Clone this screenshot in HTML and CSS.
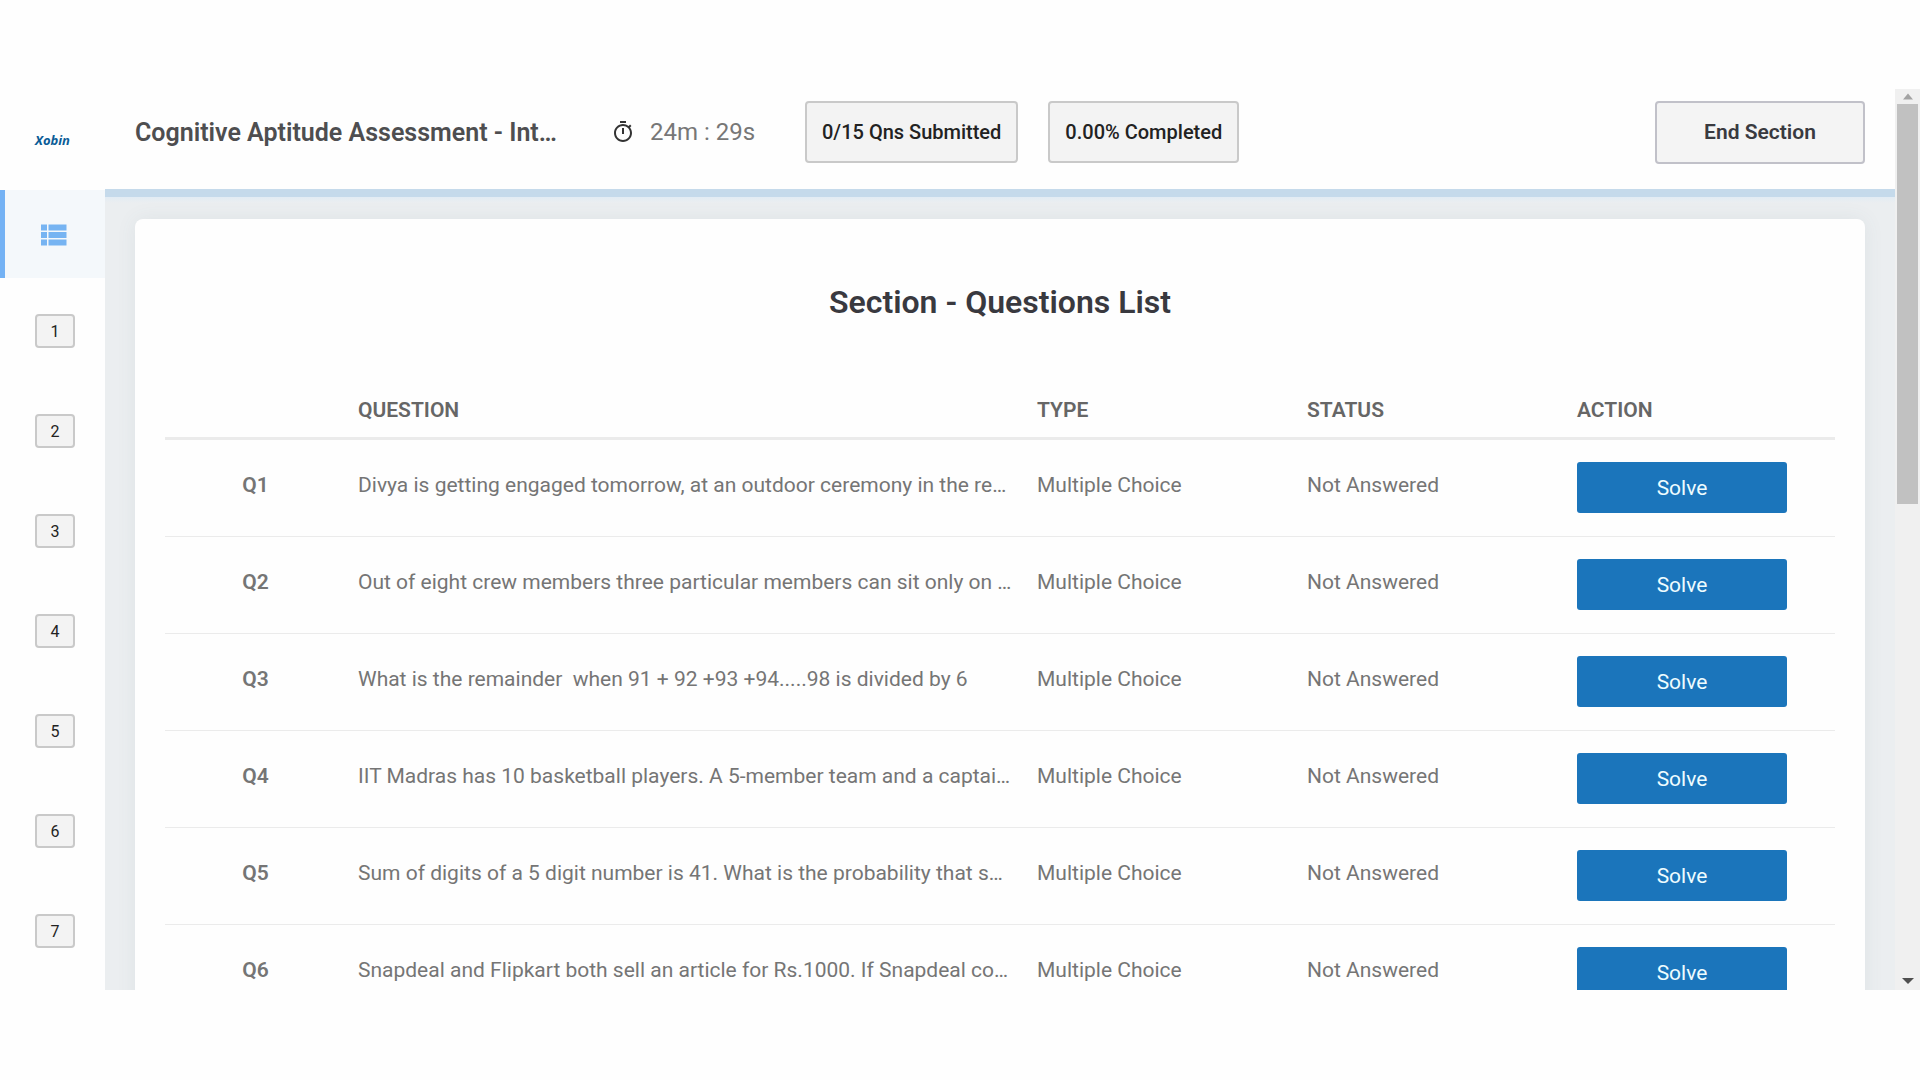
FILE: index.html
```html
<!DOCTYPE html>
<html lang="en">
<head>
    <meta charset="UTF-8">
    <meta name="viewport" content="width=device-width, initial-scale=1.0">
    <title>Section - Questions List</title>
    <link rel="stylesheet" href="styles.css">
</head>
<body>
    <div class="app">
        <aside class="sidebar">
            <a href="#" class="logo">Xobin</a>
            <nav class="side-nav">
                <a href="#" class="nav-list" aria-label="Questions list">
                    <svg width="36" height="36" viewBox="0 0 24 24" fill="currentColor"><path d="M4 14h4v-4H4v4zm0 5h4v-4H4v4zM4 9h4V5H4v4zm5 5h12v-4H9v4zm0 5h12v-4H9v4zM9 5v4h12V5H9z"/></svg>
                </a>
                <button class="nav-num">1</button>
                <button class="nav-num">2</button>
                <button class="nav-num">3</button>
                <button class="nav-num">4</button>
                <button class="nav-num">5</button>
                <button class="nav-num">6</button>
                <button class="nav-num">7</button>
            </nav>
        </aside>

        <div class="page">
            <header class="topbar">
                <h1 class="test-name">Cognitive Aptitude Assessment - Int…</h1>
                <div class="timer">
                    <svg width="24" height="24" viewBox="0 0 24 24" fill="currentColor"><path d="M15 1H9v2h6V1zm-4 13h2V8h-2v6zm8.030-6.610l1.420-1.420c-.43-.51-.9-.99-1.410-1.410l-1.420 1.420C16.070 4.740 14.120 4 12 4c-4.970 0-9 4.030-9 9s4.020 9 9 9 9-4.030 9-9c0-2.120-.74-4.070-1.970-5.610zM12 20c-3.870 0-7-3.130-7-7s3.130-7 7-7 7 3.130 7 7-3.130 7-7 7z"/></svg>
                    <span class="time">24m : 29s</span>
                </div>
                <div class="badge">0/15 Qns Submitted</div>
                <div class="badge">0.00% Completed</div>
                <button class="end-btn">End Section</button>
            </header>

            <main class="content">
                <section class="card">
                    <h2>Section - Questions List</h2>
                    <table class="questions">
                        <thead>
                            <tr>
                                <th class="col-num"></th>
                                <th class="col-question">QUESTION</th>
                                <th>TYPE</th>
                                <th>STATUS</th>
                                <th>ACTION</th>
                            </tr>
                        </thead>
                        <tbody>
                            <tr>
                                <th scope="row">Q1</th>
                                <td>Divya is getting engaged tomorrow, at an outdoor ceremony in the re…</td>
                                <td>Multiple Choice</td>
                                <td>Not Answered</td>
                                <td><button class="solve-btn">Solve</button></td>
                            </tr>
                            <tr>
                                <th scope="row">Q2</th>
                                <td>Out of eight crew members three particular members can sit only on …</td>
                                <td>Multiple Choice</td>
                                <td>Not Answered</td>
                                <td><button class="solve-btn">Solve</button></td>
                            </tr>
                            <tr>
                                <th scope="row">Q3</th>
                                <td>What is the remainder&nbsp; when 91 + 92 +93 +94.....98 is divided by 6</td>
                                <td>Multiple Choice</td>
                                <td>Not Answered</td>
                                <td><button class="solve-btn">Solve</button></td>
                            </tr>
                            <tr>
                                <th scope="row">Q4</th>
                                <td>IIT Madras has 10 basketball players. A 5-member team and a captai…</td>
                                <td>Multiple Choice</td>
                                <td>Not Answered</td>
                                <td><button class="solve-btn">Solve</button></td>
                            </tr>
                            <tr>
                                <th scope="row">Q5</th>
                                <td>Sum of digits of a 5 digit number is 41. What is the probability that s…</td>
                                <td>Multiple Choice</td>
                                <td>Not Answered</td>
                                <td><button class="solve-btn">Solve</button></td>
                            </tr>
                            <tr>
                                <th scope="row">Q6</th>
                                <td>Snapdeal and Flipkart both sell an article for Rs.1000. If Snapdeal co…</td>
                                <td>Multiple Choice</td>
                                <td>Not Answered</td>
                                <td><button class="solve-btn">Solve</button></td>
                            </tr>
                        </tbody>
                    </table>
                </section>
            </main>
        </div>

        <div class="scrollbar">
            <svg class="arrow-up" width="10" height="6" viewBox="0 0 10 6"><path d="M0 6L5 0l5 6z"/></svg>
            <div class="thumb"></div>
            <svg class="arrow-down" width="12" height="6" viewBox="0 0 12 6"><path d="M0 0h12L6 6z"/></svg>
        </div>
    </div>
</body>
</html>
```
FILE: styles.css
```css
* {
    box-sizing: border-box;
}
body {
    margin: 0;
    height: 100vh;
    padding: 89px 0 90px;
    background: #fefefe;
    font-family: Roboto, Arial, sans-serif;
    font-size: 21px;
    color: #757575;
}
button {
    font-family: inherit;
    cursor: pointer;
}
.app {
    display: grid;
    grid-template-columns: 105px 1fr 25px;
    grid-template-rows: minmax(0, 1fr);
    height: 100%;
    overflow: hidden;
}

/* left menu */
.sidebar {
    overflow: hidden;
}
.logo {
    display: flex;
    align-items: center;
    justify-content: center;
    height: 101px;
    color: #0b5c97;
    font: italic bold 13px "Open Sans", sans-serif;
    text-decoration: none;
}
.side-nav {
    display: flex;
    flex-direction: column;
    align-items: center;
    gap: 66px;
}
.nav-list {
    display: flex;
    align-items: center;
    justify-content: center;
    width: 100%;
    height: 88px;
    margin-bottom: -30px;
    padding: 2px 4px 0 0;
    border-left: 5px solid #74b2f4;
    background: #f4f8fb;
    color: #76b4f2;
}
.nav-num {
    width: 40px;
    height: 34px;
    margin-left: 5px;
    padding: 0;
    border: 2px solid #c9c9c9;
    border-radius: 4px;
    background: #f3f3f3;
    color: #222;
    font-size: 16px;
}

/* header */
.page {
    display: flex;
    flex-direction: column;
    min-width: 0;
}
.topbar {
    display: flex;
    align-items: center;
    flex-shrink: 0;
    gap: 30px;
    height: 100px;
    padding: 0 30px 14px;
    white-space: nowrap;
}
.test-name {
    width: 446px;
    margin: 0;
    color: #4e4e50;
    font-size: 25px;
    font-weight: 600;
}
.timer {
    display: flex;
    align-items: center;
    gap: 15px;
    width: 164px;
    color: #333;
}
.time {
    color: #777;
    font-size: 24px;
}
.badge {
    padding: 17px 15px;
    border: 2px solid #c9c9c9;
    border-radius: 4px;
    background: #f3f3f3;
    color: #222;
    font-size: 20px;
    font-weight: 500;
    line-height: 24px;
}
.end-btn {
    width: 210px;
    height: 63px;
    margin-left: auto;
    border: 2px solid #c1c1c9;
    border-radius: 4px;
    background: #f4f4f4;
    color: #393a40;
    font-size: 21px;
    font-weight: 600;
}

/* content */
.content {
    flex: 1;
    min-height: 0;
    padding: 17px 30px 0;
    overflow: hidden;
    border-top: 8px solid #c5daeb;
    background: linear-gradient(#e2ecf4, #ebeef0 6px);
}
.card {
    padding: 65px 30px 30px;
    margin-top: 5px;
    border-radius: 8px;
    background: #fefefe;
    box-shadow: 0 0 20px rgba(80, 100, 120, 0.08);
}
.card h2 {
    margin: 0;
    color: #39393f;
    font-size: 32px;
    font-weight: 600;
    line-height: 36px;
    text-align: center;
}
.questions {
    width: 100%;
    margin-top: 65px;
    border-collapse: collapse;
    table-layout: fixed;
    white-space: nowrap;
}
.questions th,
.questions td {
    width: 270px;
    padding: 22px 12px 23px;
    border-bottom: 1px solid #ebebeb;
    line-height: 46px;
    text-align: left;
    vertical-align: top;
}
.questions thead th {
    padding: 12px 12px 14px;
    border-bottom: 3px solid #ebebeb;
    color: #666;
    font-size: 21px;
    font-weight: 600;
    line-height: 26px;
}
.questions tbody th {
    font-weight: 600;
    text-align: center;
}
.questions .col-num {
    width: 181px;
}
.questions .col-question {
    width: auto;
}
.solve-btn {
    display: block;
    width: 210px;
    max-width: 100%;
    height: 51px;
    border: 0;
    border-radius: 3px;
    background: #1b75bb;
    color: #eefcff;
    font-size: 21px;
}

/* scrollbar */
.scrollbar {
    display: flex;
    flex-direction: column;
    align-items: center;
    padding-bottom: 6px;
    background: #f0f0f0;
}
.arrow-up {
    height: 15px;
    fill: #a3a3a3;
}
.thumb {
    width: 21px;
    height: 400px;
    background: #c1c1c1;
}
.arrow-down {
    margin-top: auto;
    fill: #505050;
}
```
